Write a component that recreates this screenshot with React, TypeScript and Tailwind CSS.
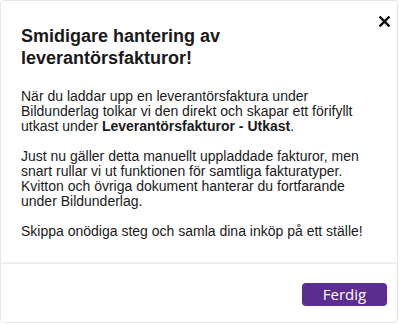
import React from 'react';

export default function App() {
  return (
    <div className="w-[400px] h-[324px] bg-white overflow-hidden">
      <div className="relative w-[398px] h-[323px] bg-white border border-[#e6e6e6] rounded-[4px] flex flex-col font-['Liberation_Sans',Arial,sans-serif] text-[#1a1a1a]">
        {/* Close button */}
        <button aria-label="Stäng" className="absolute right-[6px] top-[13px] w-[14px] h-[14px] flex items-center justify-center">
          <svg viewBox="0 0 12 12" className="w-[11px] h-[11px]">
            <path d="M1.5 1.5 L10.5 10.5 M10.5 1.5 L1.5 10.5" stroke="#111" strokeWidth="2.6" strokeLinecap="square" />
          </svg>
        </button>

        <div className="px-[20px] pt-[24px]">
          <h2 className="text-[18px] leading-[22px] font-bold text-[#1a1a1a] pr-8">
            Smidigare hantering av leverantörsfakturor!
          </h2>
          <div className="mt-[20px] text-[14px] leading-[15px] space-y-[15px]">
            <p>
              När du laddar upp en leverantörsfaktura under Bildunderlag tolkar vi den direkt och skapar ett förifyllt
              utkast under <strong>Leverantörsfakturor - Utkast</strong>.
            </p>
            <p>
              Just nu gäller detta manuellt uppladdade fakturor, men snart rullar vi ut funktionen för samtliga fakturatyper.
              Kvitton och övriga dokument hanterar du fortfarande under Bildunderlag.
            </p>
            <p>Skippa onödiga steg och samla dina inköp på ett ställe!</p>
          </div>
        </div>

        <div className="mt-[23px] h-[2px] bg-[#eeeeee]" />
        <div className="flex justify-end px-[10px] pt-[19px]">
          <button className="w-[85px] h-[23px] rounded-[4px] bg-[#5c2d91] text-white text-[15px] leading-none font-['Open_Sans',sans-serif]">
            Ferdig
          </button>
        </div>
      </div>
    </div>
  );
}
